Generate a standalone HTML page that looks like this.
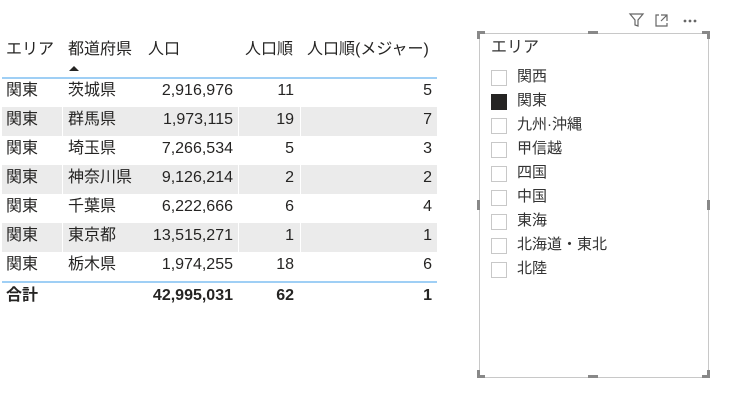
<!DOCTYPE html>
<html><head><meta charset="utf-8"><style>
body{margin:0;width:743px;height:404px;background:#fff;font-family:"Liberation Sans","Noto Sans CJK JP",sans-serif;color:#252423;position:relative;overflow:hidden}
.t{position:absolute;font-size:16px;white-space:nowrap;line-height:18px}
.r{text-align:right}
.row{position:absolute;left:2px;width:435px;height:29px}
.g{background:#ebebeb}
.vl{position:absolute;width:1px;background:#fff}
.cb{position:absolute;left:491px;width:14px;height:14px;border:1px solid #c8c8c8;background:#fff}
.it{position:absolute;left:517px;font-size:15px;line-height:18px;color:#333;white-space:nowrap}
.h{position:absolute;background:#888}
</style></head><body>
<div class="row g" style="top:107px"></div>
<div class="row g" style="top:165px"></div>
<div class="row g" style="top:223px"></div>
<div style="position:absolute;left:2px;top:77px;width:435px;height:2px;background:#9fcff5"></div>
<div style="position:absolute;left:2px;top:281px;width:435px;height:2px;background:#9fcff5"></div>
<div class="vl" style="left:62px;top:79px;height:202px"></div>
<div class="vl" style="left:238px;top:79px;height:202px"></div>
<div class="vl" style="left:300px;top:79px;height:202px"></div>
<div class="t" style="left:6px;top:41px">エリア</div>
<div class="t" style="left:68px;top:41px">都道府県</div>
<div style="position:absolute;left:69px;top:66px;width:0;height:0;border-left:5px solid transparent;border-right:5px solid transparent;border-bottom:5px solid #252423"></div>
<div class="t" style="left:148px;top:41px">人口</div>
<div class="t" style="left:245px;top:41px">人口順</div>
<div class="t" style="left:307px;top:41px">人口順(メジャー)</div>
<div id="rows"></div>
<div style="position:absolute;left:479px;top:33px;width:228px;height:343px;border:1px solid #c8c8c8"></div>
<div class="h" style="left:477px;top:31px;width:8px;height:3px"></div><div class="h" style="left:477px;top:31px;width:3px;height:8px"></div>
<div class="h" style="left:702px;top:31px;width:8px;height:3px"></div><div class="h" style="left:707px;top:31px;width:3px;height:8px"></div>
<div class="h" style="left:477px;top:375px;width:8px;height:3px"></div><div class="h" style="left:477px;top:370px;width:3px;height:8px"></div>
<div class="h" style="left:702px;top:375px;width:8px;height:3px"></div><div class="h" style="left:707px;top:370px;width:3px;height:8px"></div>
<div class="h" style="left:588px;top:31px;width:10px;height:3px"></div>
<div class="h" style="left:588px;top:375px;width:10px;height:3px"></div>
<div class="h" style="left:477px;top:200px;width:3px;height:10px"></div>
<div class="h" style="left:707px;top:200px;width:3px;height:10px"></div>
<div class="t" style="left:491px;top:39px;color:#333">エリア</div>
<div id="sl"></div>
<svg style="position:absolute;left:628px;top:12px" width="70" height="16" viewBox="0 0 70 16" fill="none" stroke="#666" stroke-width="1.2">
<path d="M2 2H15L10 8V14L7 13V8Z"/>
<path d="M31 3H28V14H39V11M33 3H39V9M39 3L33 9"/>
<circle cx="57" cy="9" r=".8" fill="#666"/><circle cx="62" cy="9" r=".8" fill="#666"/><circle cx="67" cy="9" r=".8" fill="#666"/>
</svg>
<script>
var d=[["関東","茨城県","2,916,976","11","5"],["関東","群馬県","1,973,115","19","7"],["関東","埼玉県","7,266,534","5","3"],["関東","神奈川県","9,126,214","2","2"],["関東","千葉県","6,222,666","6","4"],["関東","東京都","13,515,271","1","1"],["関東","栃木県","1,974,255","18","6"]];
var h="";d.forEach(function(r,i){var y=82+i*29;
h+='<div class="t" style="left:6px;top:'+y+'px">'+r[0]+'</div><div class="t" style="left:68px;top:'+y+'px">'+r[1]+'</div><div class="t r" style="right:510px;top:'+y+'px">'+r[2]+'</div><div class="t r" style="right:449px;top:'+y+'px">'+r[3]+'</div><div class="t r" style="right:311px;top:'+y+'px">'+r[4]+'</div>';});
h+='<div class="t" style="left:6px;top:287px;font-weight:bold">合計</div><div class="t r" style="right:510px;top:287px;font-weight:bold">42,995,031</div><div class="t r" style="right:449px;top:287px;font-weight:bold">62</div><div class="t r" style="right:311px;top:287px;font-weight:bold">1</div>';
document.getElementById("rows").innerHTML=h;
var s=["関西","関東","九州·沖縄","甲信越","四国","中国","東海","北海道・東北","北陸"],g="";
s.forEach(function(n,i){var y=70+i*24;g+='<div class="cb" style="top:'+y+'px;'+(i==1?'background:#252423;border-color:#252423':'')+'"></div><div class="it" style="top:'+(y-2)+'px">'+n+'</div>';});
document.getElementById("sl").innerHTML=g;
</script>
</body></html>
